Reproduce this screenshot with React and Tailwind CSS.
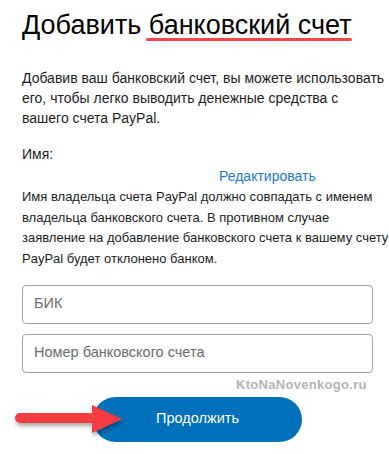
export default function App() {
  return (
    <div className="relative w-[389px] h-[454px] bg-white overflow-hidden font-['Liberation_Sans',Arial,sans-serif] text-[#2c2e2f]">
      <div className="pl-[22px] pr-[2px] pt-[9px]">
        <h1 className="text-[27px] leading-[32px] text-black whitespace-nowrap">
          Добавить{' '}
          <span className="relative">
            банковский счет
            <span className="absolute left-[-3px] right-0 top-[28px] h-[3px] rounded-full bg-[#f44448]" />
          </span>
        </h1>

        <p className="mt-[27px] text-[14px] leading-[20px] text-[#1d1d1d] whitespace-nowrap">
          Добавив ваш банковский счет, вы можете использовать
          <br />
          его, чтобы легко выводить денежные средства с
          <br />
          вашего счета PayPal.
        </p>

        <p className="mt-[16px] text-[14px] leading-[20px] text-[#1d1d1d]">Имя:</p>
        <div className="mt-[2px] pl-[197px] text-[14px] leading-[20px] text-[#2579c8]">Редактировать</div>

        <p className="mt-[1px] text-[13px] leading-[20.7px] text-[#1d1d1d] whitespace-nowrap">
          Имя владельца счета PayPal должно совпадать с именем
          <br />
          владельца банковского счета. В противном случае
          <br />
          заявление на добавление банковского счета к вашему счету
          <br />
          PayPal будет отклонено банком.
        </p>

        <div className="mt-[15px] flex flex-col gap-[10px] w-[351px]">
          <div className="h-[39px] rounded-[4px] border border-[#a3a3a3] flex items-center pl-[11px] text-[14.5px] text-[#6c6c6c]">
            БИК
          </div>
          <div className="h-[39px] rounded-[4px] border border-[#a3a3a3] flex items-center pl-[11px] text-[14.5px] text-[#6c6c6c]">
            Номер банковского счета
          </div>
        </div>

        <div className="mt-[4px] pl-[214px] text-[13px] leading-[16px] font-bold text-[#b4b4b4] tracking-[0.3px]">
          KtoNaNovenkogo.ru
        </div>

        <div className="mt-[4px] ml-[71px] w-[209px] h-[45px] rounded-full bg-[#0070ba] flex items-center justify-center text-white text-[14.5px]">
          Продолжить
        </div>
      </div>

      <svg className="absolute left-0 top-[398px]" width="140" height="45" viewBox="0 0 140 45">
        <defs>
          <filter id="sh" x="-20%" y="-30%" width="140%" height="180%">
            <feDropShadow dx="1" dy="3" stdDeviation="2" floodColor="#000" floodOpacity="0.35" />
          </filter>
        </defs>
        <g filter="url(#sh)">
          <rect x="15" y="15" width="82" height="10" rx="5" fill="#f63c43" />
          <polygon points="92,7 122,21 92,35" fill="#f63c43" />
        </g>
      </svg>
    </div>
  );
}
